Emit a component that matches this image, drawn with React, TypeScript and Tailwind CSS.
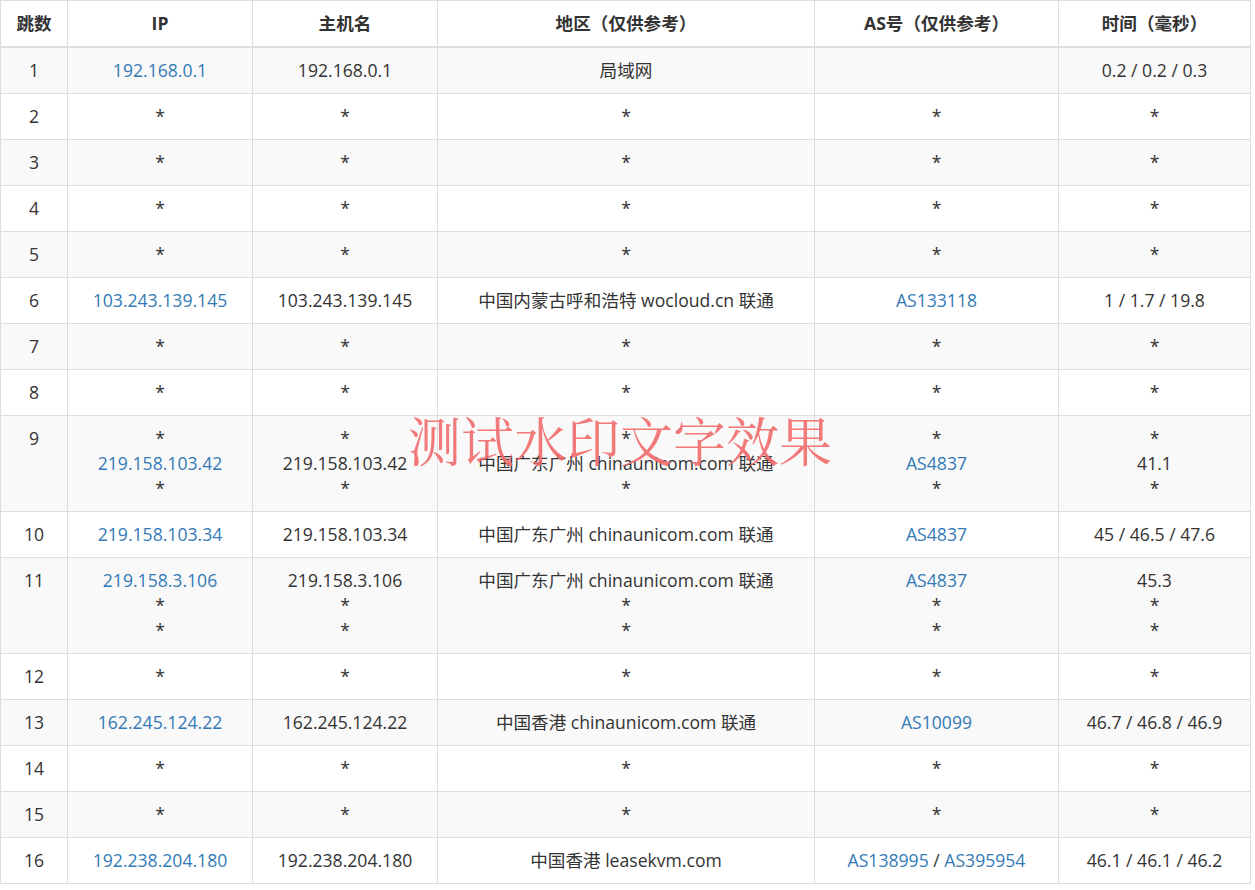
const S = "*";
type Cell = string | string[];
type Row = { hop: string; ip: Cell; host: Cell; area: Cell; as: Cell; time: Cell };

const rows: Row[] = [
  { hop: "1", ip: "192.168.0.1", host: "192.168.0.1", area: "局域网", as: "", time: "0.2 / 0.2 / 0.3" },
  ...["2", "3", "4", "5"].map((h) => ({ hop: h, ip: S, host: S, area: S, as: S, time: S })),
  { hop: "6", ip: "103.243.139.145", host: "103.243.139.145", area: "中国内蒙古呼和浩特 wocloud.cn 联通", as: "AS133118", time: "1 / 1.7 / 19.8" },
  { hop: "7", ip: S, host: S, area: S, as: S, time: S },
  { hop: "8", ip: S, host: S, area: S, as: S, time: S },
  { hop: "9", ip: [S, "219.158.103.42", S], host: [S, "219.158.103.42", S], area: [S, "中国广东广州 chinaunicom.com 联通", S], as: [S, "AS4837", S], time: [S, "41.1", S] },
  { hop: "10", ip: "219.158.103.34", host: "219.158.103.34", area: "中国广东广州 chinaunicom.com 联通", as: "AS4837", time: "45 / 46.5 / 47.6" },
  { hop: "11", ip: ["219.158.3.106", S, S], host: ["219.158.3.106", S, S], area: ["中国广东广州 chinaunicom.com 联通", S, S], as: ["AS4837", S, S], time: ["45.3", S, S] },
  { hop: "12", ip: S, host: S, area: S, as: S, time: S },
  { hop: "13", ip: "162.245.124.22", host: "162.245.124.22", area: "中国香港 chinaunicom.com 联通", as: "AS10099", time: "46.7 / 46.8 / 46.9" },
  { hop: "14", ip: S, host: S, area: S, as: S, time: S },
  { hop: "15", ip: S, host: S, area: S, as: S, time: S },
  { hop: "16", ip: "192.238.204.180", host: "192.238.204.180", area: "中国香港 leasekvm.com", as: "AS138995 / AS395954", time: "46.1 / 46.1 / 46.2" },
];

function Line({ v, link }: { v: string; link?: boolean }) {
  if (v === S) return <div>*</div>;
  if (!link) return <div>{v}</div>;
  if (v.includes(" / ")) {
    const parts = v.split(" / ");
    return (
      <div>
        {parts.map((p, i) => (
          <span key={i}>
            {i > 0 && " / "}
            <span className="text-[#337ab7]">{p}</span>
          </span>
        ))}
      </div>
    );
  }
  return <div className="text-[#337ab7]">{v}</div>;
}

function Td({ c, link }: { c: Cell; link?: boolean }) {
  const lines = Array.isArray(c) ? c : [c];
  return (
    <td className="border border-[#ddd] px-2 py-[10px] text-center align-top">
      {lines.map((l, i) => (
        <Line key={i} v={l} link={link} />
      ))}
    </td>
  );
}

export default function App() {
  const heads = ["跳数", "IP", "主机名", "地区（仅供参考）", "AS号（仅供参考）", "时间（毫秒）"];
  const widths = ["w-[67px]", "w-[185px]", "w-[185px]", "w-[377px]", "w-[244px]", "w-[192px]"];
  return (
    <div className="relative bg-white w-[1255px] h-[890px] text-[#333] text-[17.6px] leading-[25px]" style={{ fontFamily: '"Open Sans","Noto Sans CJK SC",sans-serif' }}>
      <table className="w-[1250px] border-collapse table-fixed">
        <thead>
          <tr>
            {heads.map((h, i) => (
              <th key={h} className={`${widths[i]} border border-[#ddd] border-b-2 px-2 py-[10px] font-bold text-center`}>
                {h}
              </th>
            ))}
          </tr>
        </thead>
        <tbody>
          {rows.map((r, i) => (
            <tr key={r.hop} className={i % 2 === 0 ? "bg-[#f9f9f9]" : "bg-white"}>
              <Td c={r.hop} />
              <Td c={r.ip} link />
              <Td c={r.host} />
              <Td c={r.area} />
              <Td c={r.as} link />
              <Td c={r.time} />
            </tr>
          ))}
        </tbody>
      </table>
      <div className="absolute left-[408px] top-[408px] text-[53px] leading-[62px] text-[#f06a6a]/90 pointer-events-none" style={{ fontFamily: '"Noto Serif CJK SC","Noto Sans CJK SC",serif' }}>
        测试水印文字效果
      </div>
    </div>
  );
}
